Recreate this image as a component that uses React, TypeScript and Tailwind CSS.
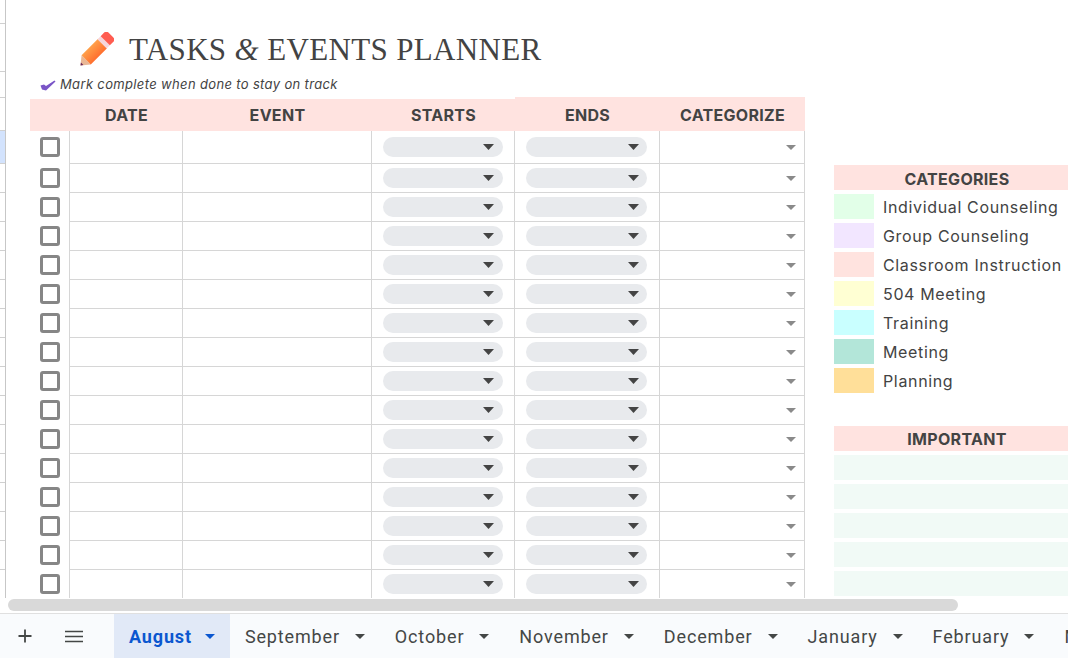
import React from "react";

const gutter = [
  "h-[24px]", "h-[48px]", "h-[26px]", "h-[33px]", "h-[33px] bg-[#d3e3fd]",
  ...Array.from({ length: 15 }, () => "h-[29px]"),
];

const categories = [
  ["Individual Counseling", "bg-[#e2ffe8]"],
  ["Group Counseling", "bg-[#f2e6ff]"],
  ["Classroom Instruction", "bg-[#ffe3df]"],
  ["504 Meeting", "bg-[#ffffd3]"],
  ["Training", "bg-[#c9ffff]"],
  ["Meeting", "bg-[#b3e6d9]"],
  ["Planning", "bg-[#ffdf99]"],
];

const tabs = ["September", "October", "November", "December", "January", "February", "March"];

function Caret({ className }: { className: string }) {
  return (
    <svg viewBox="0 0 14 7" preserveAspectRatio="none" className={className}>
      <path d="M0 0 H14 L7 7 Z" fill="currentColor" />
    </svg>
  );
}

function Pill({ w, pr }: { w: string; pr: string }) {
  return (
    <div className={`h-[20px] ${w} ${pr} rounded-[10px] bg-[#e8eaed] flex items-center justify-end text-[#444444]`}>
      <Caret className="w-[11px] h-[6px]" />
    </div>
  );
}

function Pencil() {
  return (
    <svg width="34" height="34" viewBox="0 0 34 34" className="shrink-0">
      <defs>
        <linearGradient id="body" x1="0" y1="0" x2="1" y2="0">
          <stop offset="0" stopColor="#ffa04a" />
          <stop offset="1" stopColor="#ff6f2e" />
        </linearGradient>
      </defs>
      <g transform="translate(0.5 33.5) rotate(45)">
        <path d="M-6.5 -8 L0 0 L6.5 -8 Z" fill="#e9b795" />
        <path d="M-1.8 -2.4 L0 0 L1.8 -2.4 Z" fill="#6d2c5a" />
        <rect x="-6.5" y="-31" width="13" height="23" fill="url(#body)" />
        <rect x="-6.5" y="-35" width="13" height="4.5" fill="#f6d5da" />
        <path d="M-6.5 -35 V-40 Q-6.5 -43 -3.5 -43 H3.5 Q6.5 -43 6.5 -40 V-35 Z" fill="#ff5c50" />
      </g>
    </svg>
  );
}

function Check() {
  return (
    <svg width="16" height="11" viewBox="0 0 16 11" className="shrink-0">
      <path d="M0.5 5.5 L4 4.5 L6 6 L14.5 0.5 L15.5 1.5 L6 10.5 L2 9.5 Z" fill="#7a55c7" />
    </svg>
  );
}

function Row({ first }: { first: boolean }) {
  const line = "border-b border-r border-[#d6d6d6]";
  return (
    <div className={`grid grid-cols-[40px_113px_189px_143px_145px_145px] ${first ? "h-[33px]" : "h-[29px]"}`}>
      <div className="border-r border-[#d6d6d6] pl-[10px] pb-[1px] flex items-center">
        <div className="w-[20px] h-[20px] border-[3px] border-[#868686] rounded-[3px]" />
      </div>
      <div className={line} />
      <div className={line} />
      <div className={`${line} pl-[11px] flex items-center`}>
        <Pill w="w-[120px]" pr="pr-[9px]" />
      </div>
      <div className={`${line} pl-[11px] flex items-center`}>
        <Pill w="w-[121px]" pr="pr-[8px]" />
      </div>
      <div className={`${line} flex items-center justify-end pr-[8px] text-[#8a8a8a]`}>
        <Caret className="w-[10px] h-[5px]" />
      </div>
    </div>
  );
}

function Head({ label, tall }: { label: string; tall?: boolean }) {
  return (
    <div className={`bg-[#ffe3e0] flex items-center justify-center font-bold text-[16px] tracking-[0.3px] ${tall ? "h-[34px] pt-[2px]" : "h-[32px] mt-[2px]"}`}>
      {label}
    </div>
  );
}

export default function App() {
  return (
    <div className="w-[1068px] h-[658px] overflow-hidden flex flex-col bg-white text-[#434343] font-['Inter','Liberation_Sans',sans-serif]">
      <div className="h-[598px] flex overflow-hidden shrink-0">
        <div className="w-[6px] shrink-0 border-r border-[#c7c7c7]">
          {gutter.map((g, i) => (
            <div key={i} className={`${g} border-b border-[#d0d0d0]`} />
          ))}
        </div>

        <div className="ml-[24px] w-[775px] shrink-0">
          <div className="h-[97px] flex flex-col">
            <div className="h-[74px] pl-[50px] pt-[32px] flex items-start gap-[15px]">
              <Pencil />
              <h1 className="mt-[1px] font-['Liberation_Serif',serif] text-[31px] leading-[34px] tracking-[0.35px] text-[#434343] whitespace-nowrap">
                TASKS <span className="italic">&amp;</span> EVENTS PLANNER
              </h1>
            </div>
            <div className="pl-[10px] flex items-center gap-[4px] h-[20px] mt-[1px]">
              <Check />
              <span className="italic text-[13px] tracking-[0.35px] whitespace-nowrap">Mark complete when done to stay on track</span>
            </div>
          </div>

          <div className="grid grid-cols-[40px_113px_189px_143px_145px_145px]">
            <Head label="" />
            <Head label="DATE" />
            <Head label="EVENT" />
            <Head label="STARTS" />
            <Head label="ENDS" tall />
            <Head label="CATEGORIZE" tall />
          </div>

          {Array.from({ length: 16 }, (_, i) => (
            <Row key={i} first={i === 0} />
          ))}
        </div>

        <div className="ml-[29px] pt-[165px] w-[300px] shrink-0">
          <div className="h-[25px] w-[246px] pt-[2px] bg-[#ffe3e0] flex items-center justify-center font-bold text-[16px] tracking-[0.3px]">CATEGORIES</div>
          <div className="mt-[4px] flex flex-col gap-[4px]">
            {categories.map(([name, color]) => (
              <div key={name} className="flex items-center h-[25px] gap-[9px]">
                <div className={`w-[40px] h-[25px] ${color}`} />
                <span className="text-[16px] tracking-[0.65px] whitespace-nowrap">{name}</span>
              </div>
            ))}
          </div>
          <div className="mt-[33px] h-[25px] w-[246px] bg-[#ffe3e0] flex items-center justify-center font-bold text-[16px] tracking-[0.3px]">IMPORTANT</div>
          <div className="mt-[4px] flex flex-col gap-[4px]">
            {[0, 1, 2, 3, 4].map((i) => (
              <div key={i} className="h-[25px] w-[246px] bg-[#f1faf6]" />
            ))}
          </div>
        </div>
      </div>

      <div className="h-[16px] shrink-0 border-b border-[#e0e0e0] pl-[8px] pt-[1px]">
        <div className="w-[950px] h-[12px] rounded-full bg-[#d9d9d9]" />
      </div>

      <div className="flex-1 bg-[#f9fbfd] flex items-center overflow-hidden font-['Roboto',sans-serif] text-[18px] tracking-[0.85px]">
        <div className="w-[114px] shrink-0 h-full flex items-center text-[#444746]">
          <svg width="14" height="14" viewBox="0 0 14 14" className="ml-[18px]">
            <path d="M7 0.5 V13.5 M0.5 7 H13.5" stroke="currentColor" strokeWidth="1.8" />
          </svg>
          <svg width="18" height="13" viewBox="0 0 18 13" className="ml-[33px]">
            <path d="M0 1.5 H18 M0 6.5 H18 M0 11.5 H18" stroke="currentColor" strokeWidth="1.7" />
          </svg>
        </div>
        <div className="h-full bg-[#e1e9f7] pl-[15px] pr-[15px] gap-[13px] flex items-center text-[#0b57d0] font-bold shrink-0">
          August
          <Caret className="w-[10px] h-[5px]" />
        </div>
        {tabs.map((t) => (
          <div key={t} className="h-full pl-[15px] pr-[15px] gap-[15px] flex items-center shrink-0 font-normal text-[#444746]">
            {t}
            <Caret className="w-[10px] h-[5px]" />
          </div>
        ))}
      </div>
    </div>
  );
}
